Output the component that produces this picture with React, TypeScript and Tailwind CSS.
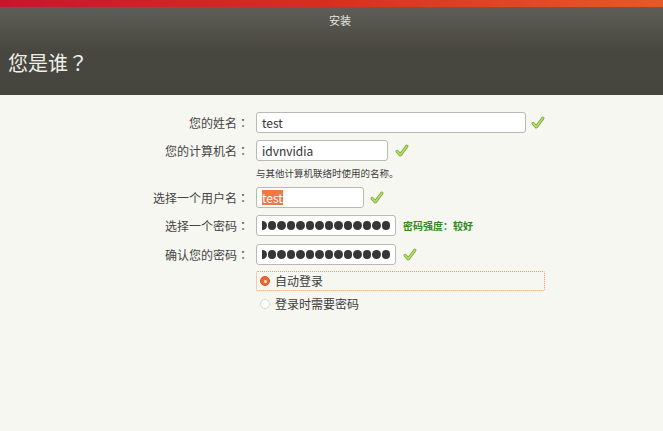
const font = "font-['Noto_Sans_CJK_SC','Noto_Sans',sans-serif]";
const tc = "font-['Noto_Sans_CJK_TC',sans-serif]";

const Check = () => (
  <svg width="14" height="14" viewBox="0 0 16 16" className="shrink-0">
    <path d="M2.5 8.5 L6 12.5 L13.5 2.5" fill="none" stroke="#7ca237" strokeWidth="3.6" strokeLinecap="round" strokeLinejoin="round" />
    <path d="M2.5 8.5 L6 12.5 L13.5 2.5" fill="none" stroke="#b2dc68" strokeWidth="2" strokeLinecap="round" strokeLinejoin="round" />
  </svg>
);

const Label = ({ text }: { text: string }) => (
  <div className="w-[249px] shrink-0 text-right text-[12px] text-[#444]">
    {text}
    <span className={tc}>：</span>
  </div>
);

const Input = ({ w, children }: { w: string; children: React.ReactNode }) => (
  <div className={`${w} h-[21px] ml-[7px] shrink-0 rounded-[3px] border border-[#b9b8b2] bg-white flex items-center pl-[5px] overflow-hidden`}>
    {children}
  </div>
);

const Dots = () => (
  <div className="flex-1 h-full flex items-center justify-end gap-[1px] pr-[5px] overflow-hidden">
    {Array.from({ length: 15 }).map((_, i) => (
      <div key={i} className="w-[8.5px] h-[8.5px] shrink-0 rounded-full bg-[#363636]" />
    ))}
  </div>
);

export default function App() {
  return (
    <div className={`w-[663px] h-[431px] bg-[#f7f7f2] overflow-hidden ${font}`}>
      <div className="h-[7px] bg-gradient-to-r from-[#c4172c] via-[#d4301f] to-[#e35b24]" />
      <div className="h-[88px] bg-gradient-to-b from-[#5f5d58] via-[#48473f] to-[#45453e] flex flex-col">
        <div className="h-[26px] flex items-center justify-center pl-[17px] text-[11px] text-[#e6e6e2]">安装</div>
        <div className="flex-1 flex items-center pl-[8px] pb-[2px] text-[20px] text-[#efefec]">
          您是谁<span className={tc}>？</span>
        </div>
      </div>

      <div className="pt-[17px] flex flex-col">
        <div className="flex items-center">
          <Label text="您的姓名" />
          <Input w="w-[270px]">
            <span className="text-[12px] text-[#333]">test</span>
          </Input>
          <div className="ml-[5px]"><Check /></div>
        </div>

        <div className="flex items-center mt-[7px]">
          <Label text="您的计算机名" />
          <Input w="w-[132px]">
            <span className="text-[12px] text-[#333]">idvnvidia</span>
          </Input>
          <div className="ml-[7px]"><Check /></div>
        </div>

        <div className="flex mt-[5px]">
          <div className="w-[256px] shrink-0" />
          <div className="text-[9.5px] text-[#3c3c3c] leading-[14px]">与其他计算机联络时使用的名称。</div>
        </div>

        <div className="flex items-center mt-[7px]">
          <Label text="选择一个用户名" />
          <Input w="w-[108px]">
            <span className="text-[12px] text-white bg-[#f07746] leading-[15px]">test</span>
          </Input>
          <div className="ml-[6px]"><Check /></div>
        </div>

        <div className="flex items-center mt-[7px]">
          <Label text="选择一个密码" />
          <Input w="w-[140px]">
            <Dots />
          </Input>
          <div className="ml-[7px] text-[10px] font-bold text-[#2f8a1c]">密码强度：较好</div>
        </div>

        <div className="flex items-center mt-[8px]">
          <Label text="确认您的密码" />
          <Input w="w-[140px]">
            <Dots />
          </Input>
          <div className="ml-[7px]"><Check /></div>
        </div>

        <div className="flex mt-[6px]">
          <div className="w-[256px] shrink-0" />
          <div className="w-[289px] h-[20px] border border-dotted border-[#e89a68] rounded-[2px] flex items-center pl-[3px]">
            <div className="w-[10px] h-[10px] rounded-full bg-[#ee6a35] border border-[#c9552a] flex items-center justify-center">
              <div className="w-[3px] h-[3px] rounded-full bg-[#fbe0d0]" />
            </div>
            <span className="ml-[5px] text-[12px] text-[#3c3c3c]">自动登录</span>
          </div>
        </div>

        <div className="flex mt-[4px]">
          <div className="w-[256px] shrink-0" />
          <div className="h-[18px] flex items-center pl-[4px]">
            <div className="w-[10px] h-[10px] rounded-full bg-white border border-[#d8d8d3]" />
            <span className="ml-[5px] text-[12px] text-[#3c3c3c]">登录时需要密码</span>
          </div>
        </div>
      </div>
    </div>
  );
}
